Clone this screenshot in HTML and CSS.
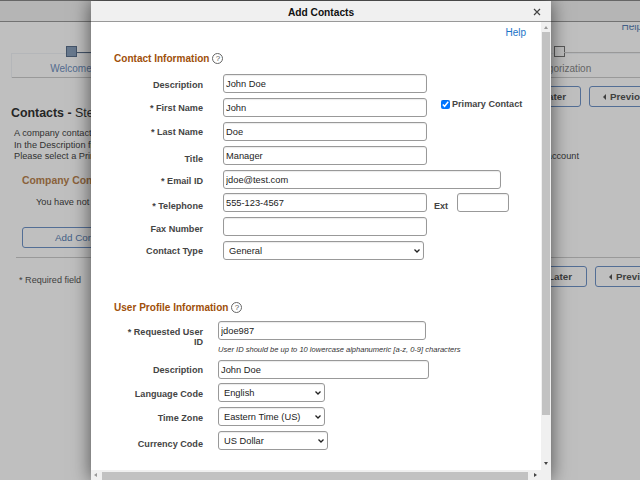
FILE: index.html
```html
<!DOCTYPE html>
<html lang="en">
<head>
<meta charset="utf-8">
<title>Add Contacts</title>
<link rel="stylesheet" href="styles.css">
</head>
<body>
<div class="page">
  <div class="banner"></div>
  <div class="help-row"><a class="page-help">Help</a></div>
  <div class="train">
    <div class="step first"><span class="box active"></span><span class="step-name">Welcome</span></div>
    <div class="step last"><span class="box"></span><span class="step-name">Categorization</span></div>
  </div>
  <div class="title-row">
    <h1 class="page-title">Contacts - <span class="step-text">Step 3 of 7</span></h1>
    <div class="nav-buttons">
      <button class="btn later">Save for Later</button>
      <button class="btn prev"><i class="tri"></i>Previous</button>
    </div>
  </div>
  <div class="intro">
    <p>A company contact is required</p>
    <p>In the Description field enter a name</p>
    <p class="split"><span>Please select a Primary Contact</span><span>account</span></p>
  </div>
  <h2 class="section">Company Contacts</h2>
  <p class="none">You have not added any contacts</p>
  <button class="btn add">Add Contact</button>
  <div class="rule"></div>
  <div class="footer-row">
    <span class="req">* Required field</span>
    <div class="nav-buttons low">
      <button class="btn later">Save for Later</button>
      <button class="btn prev"><i class="tri"></i>Previous</button>
    </div>
  </div>
</div>
<div class="overlay"></div>
<div class="modal">
  <div class="modal-head"><span class="modal-title">Add Contacts</span><svg class="close" width="8" height="8" viewBox="0 0 8 8"><path d="M1 1 7 7M7 1 1 7" stroke="#444" stroke-width="1.2" fill="none"/></svg></div>
  <div class="modal-body">
    <div class="content">
      <div class="help-line"><a class="help">Help</a></div>
      <h3 class="group">Contact Information <span class="q">?</span></h3>
      <div class="form">
        <div class="row"><label class="n3">Description</label><input class="w-m" value="John Doe"></div>
        <div class="row"><label class="n1">* First Name</label><input class="w-m" value="John"><label class="primary"><input type="checkbox" checked>Primary Contact</label></div>
        <div class="row"><label class="n1">* Last Name</label><input class="w-m" value="Doe"></div>
        <div class="row"><label class="n7">Title</label><input class="w-m" value="Manager"></div>
        <div class="row r3"><label class="n3">* Email ID</label><input class="w-l" value="jdoe@test.com"></div>
        <div class="row"><label class="n7">* Telephone</label><input class="w-m" value="555-123-4567"><label class="ext">Ext</label><input class="w-s"></div>
        <div class="row"><label class="n5">Fax Number</label><input class="w-m"></div>
        <div class="row"><label class="n0">Contact Type</label><select class="w-t"><option>General</option></select></div>
      </div>
      <h3 class="group second">User Profile Information <span class="q">?</span></h3>
      <div class="form user">
        <div class="row top"><label>* Requested User ID</label><div class="stack"><input class="w-u" value="jdoe987"><span class="hint">User ID should be up to 10 lowercase alphanumeric [a-z, 0-9] characters</span></div></div>
        <div class="row u2"><label class="n1">Description</label><input class="w-d" value="John Doe"></div>
        <div class="row"><label class="n3">Language Code</label><select class="w-sel"><option>English</option></select></div>
        <div class="row"><label class="n3">Time Zone</label><select class="w-sel"><option>Eastern Time (US)</option></select></div>
        <div class="row"><label class="n7">Currency Code</label><select class="w-cur"><option>US Dollar</option></select></div>
      </div>
    </div>
    <div class="vbar"><i class="arr up"></i><span class="vthumb"></span><i class="arr down"></i></div>
  </div>
  <div class="hbar"><i class="arr left"></i><span class="hthumb"></span><i class="arr right"></i></div>
</div>
</body>
</html>
```
FILE: styles.css
```css
* { box-sizing: border-box; }
html, body { margin: 0; height: 100%; }
body { width: 640px; height: 480px; overflow: hidden; position: relative; background: #fff; font-family: "Liberation Sans", Arial, sans-serif; font-size: 9.1px; color: #333; }
p, h1, h2, h3 { margin: 0; }

.page { height: 480px; overflow: hidden; }
.banner { height: 22px; background: #f2f2f2; border-top: 1px solid #888; border-bottom: 1px solid #999; }
.help-row { height: 7px; margin-top: 3px; overflow: hidden; }
.page-help { display: block; margin: -4px -2px 0 0; text-align: right; font-size: 10px; color: #5a7fb5; }
.train { position: relative; display: flex; justify-content: space-between; height: 32px; margin: 14px 0 0 11px; border-bottom: 1px solid #ccc; }
.train::before { content: ""; position: absolute; left: 0; right: 0; top: 7px; height: 24px; border: 1px solid #f0f3f7; border-width: 1px 0 0 1px; }
.step { position: relative; display: flex; flex-direction: column; align-items: center; width: 120px; }
.step.first::after { content: ""; position: absolute; left: 66px; top: 6px; width: 40px; height: 1px; background: #5b708c; }
.step.last { margin-right: 21px; }
.step.last::after { content: ""; position: absolute; left: 65px; top: 6px; width: 80px; height: 1px; background: #ccc; }
.box { position: relative; width: 11px; height: 11px; border: 1px solid #777; background: #fff; }
.box.active { background: #8aa0bd; border-color: #5b708c; }
.step-name { margin-top: 6px; font-size: 10px; color: #6f8fbf; white-space: nowrap; }
.step.last .step-name { color: #888; }
.title-row { display: flex; justify-content: space-between; height: 21px; margin: 8px 0 0 11px; }
.page-title { margin-top: 20px; font-size: 12.4px; line-height: 14px; font-weight: bold; color: #333; white-space: nowrap; }
.step-text { font-weight: normal; }
.nav-buttons { display: flex; gap: 8px; margin-right: -26px; }
.nav-buttons.low { margin-right: -32px; }
.btn { height: 21px; padding: 0 14px; font: bold 9.8px "Liberation Sans", Arial, sans-serif; color: #555; background: #fff; border: 1px solid #6f93c7; border-radius: 3px; white-space: nowrap; }
.later { width: 120px; text-align: right; padding-right: 14px; }
.prev { width: 77px; text-align: left; padding-left: 13px; }
.tri { display: inline-block; margin-right: 4px; border: 3px solid transparent; border-left: 0; border-right: 3px solid #555; }
.intro { margin-left: 14px; padding-top: 21px; font-size: 9.2px; line-height: 11.5px; color: #444; }
.split { display: flex; justify-content: space-between; padding-right: 61px; }
.section { margin: 12px 0 0 22px; font-size: 10.4px; font-weight: bold; color: #b8834f; }
.none { margin: 11px 0 0 36px; font-size: 9.2px; color: #444; }
.add { display: block; margin: 20px 0 0 22px; width: 120px; color: #5a7fb5; font-weight: normal; }
.rule { height: 1px; margin: 9px 0 0 16px; background: #ccc; }
.footer-row { display: flex; justify-content: space-between; margin-top: 8px; padding-left: 19px; }
.req { font-size: 9.1px; color: #555; padding-top: 9px; }

.overlay { position: absolute; inset: 0; background: rgba(0, 0, 0, .25); }
.modal { position: absolute; left: 91px; top: 1px; width: 460px; height: 479px; display: flex; flex-direction: column; background: #fff; box-shadow: 0 0 18px rgba(0, 0, 0, .6); }
.modal-head { position: relative; flex: none; height: 21px; background: #f0f0f0; border-bottom: 1px solid #999; text-align: center; line-height: 23px; }
.modal-title { font-size: 10.2px; font-weight: bold; color: #111; }
.close { position: absolute; right: 10px; top: 7px; }
.modal-body { flex: 1; display: flex; min-height: 0; }
.content { flex: 1; padding: 0 10px 0 23px; }
.help-line { height: 30px; text-align: right; padding: 5px 5px 0 0; }
.help { font-size: 10px; color: #1a73c8; }
.group { display: flex; align-items: center; gap: 3px; height: 12px; font-size: 10.05px; font-weight: bold; color: #a0500a; }
.second { margin-top: 41px; }
.q { width: 11px; height: 11px; border: 1px solid #666; border-radius: 50%; font-size: 8px; font-weight: normal; line-height: 9px; text-align: center; color: #555; }

.form { margin-top: 10px; }
.row { display: flex; align-items: center; height: 19px; margin-bottom: 5px; }
.row > label:first-child { flex: none; width: 89px; margin-right: 20px; text-align: right; font-weight: bold; color: #444; }
.row > label.n0 { padding-top: 0; }
.row > label.n1 { padding-top: 1px; }
.row > label.n3 { padding-top: 3px; }
.row > label.n5 { padding-top: 5px; }
.row > label.n7 { padding-top: 7px; }
input, select { height: 19px; margin: 0; padding: 0 2px; font: 9.3px "Liberation Sans", Arial, sans-serif; color: #222; background: #fff; border: 1px solid #999; border-radius: 3px; outline: 0; box-shadow: inset 0 1px 1px rgba(0,0,0,.08); }
select { appearance: none; padding: 0 0 0 5px; background: #fff url("data:image/svg+xml,%3Csvg xmlns='http://www.w3.org/2000/svg' width='6' height='4'%3E%3Cpath d='M.5.5 3 3 5.5.5' fill='none' stroke='%23222' stroke-width='1.3'/%3E%3C/svg%3E") no-repeat right 3px center; }
.r3 { margin-top: 1px; margin-bottom: 4px; }
.w-m { width: 204px; }
.w-l { width: 278px; }
.w-s { width: 52px; margin-left: 9px; }
.w-t { width: 201px; }
.primary { display: flex; align-items: center; margin-left: 14px; margin-top: -7px; font-weight: bold; color: #444; }
.primary input { width: 9px; height: 9px; margin: 0 2px 0 0; accent-color: #0075ff; }
.ext { margin-left: 7px; padding-top: 7px; font-weight: bold; color: #444; }

.user { margin-top: 8px; }
.user .row > label:first-child { margin-right: 15px; }
.top { height: auto; align-items: flex-start; margin-bottom: 0; }
.row.top > label:first-child { padding: 6px 0 0 5px; line-height: 10px; }
.stack { display: flex; flex-direction: column; }
.w-u { width: 208px; height: 19px; }
.hint { margin-top: 5px; font-size: 7.55px; font-style: italic; color: #333; white-space: nowrap; }
.u2 { margin-top: 6px; margin-bottom: 4px; }
.w-d { width: 211px; }
.w-sel { width: 107px; }
.w-cur { width: 110px; }

.vbar { position: relative; flex: none; width: 10px; background: #f0f0f0; }
.vthumb { position: absolute; left: 1px; right: 1px; top: 10px; height: 383px; background: #c2c2c2; }
.hbar { position: relative; flex: none; height: 10px; background: #f0f0f0; }
.hthumb { position: absolute; left: 11px; top: 2px; bottom: 0; width: 426px; background: #c2c2c2; }
.arr { position: absolute; width: 0; height: 0; border: 2.5px solid transparent; }
.up { left: 2.5px; top: 4px; border-bottom: 3px solid #999; border-top: 0; }
.down { left: 2.5px; bottom: 5px; border-top: 3px solid #444; border-bottom: 0; }
.left { left: 3px; top: 3px; border-right: 3px solid #999; border-left: 0; }
.right { left: 443px; top: 3px; border-left: 3px solid #444; border-right: 0; }
```
